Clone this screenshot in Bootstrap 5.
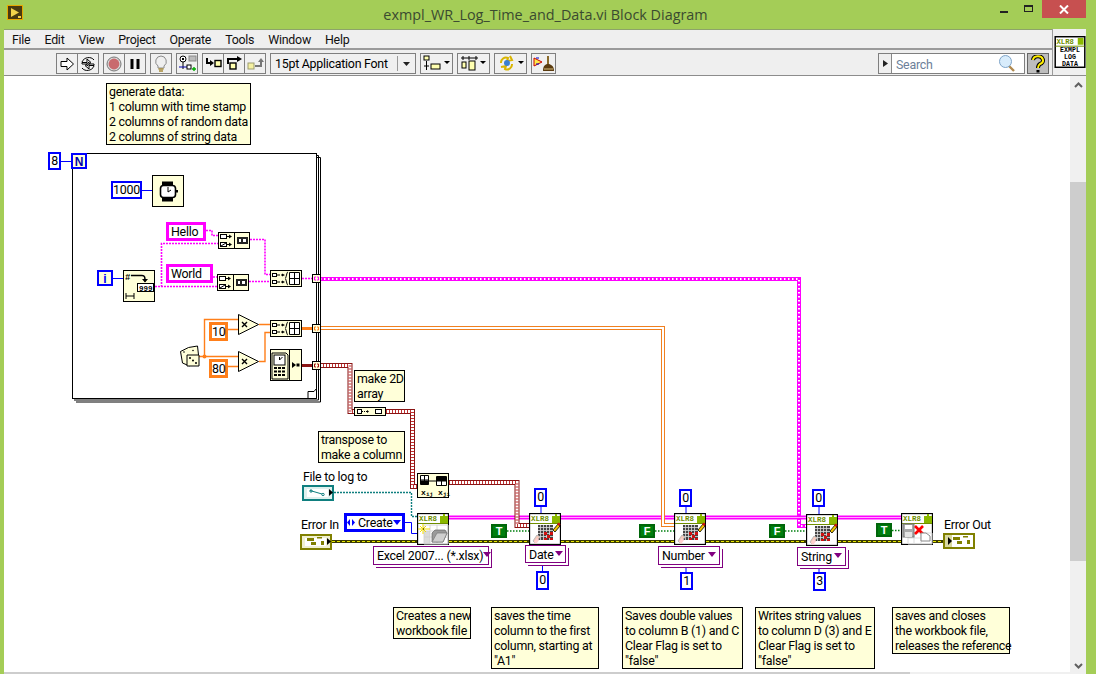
<!DOCTYPE html>
<html lang="en">
<head>
<meta charset="UTF-8">
<title>exmpl_WR_Log_Time_and_Data.vi Block Diagram</title>
<link href="https://cdn.jsdelivr.net/npm/bootstrap@5.3.0/dist/css/bootstrap.min.css" rel="stylesheet">
<style>
html, body { margin: 0; height: 100%; overflow: hidden; background: #a4cd57; }
.lv-win { width: 1096px; height: 674px; background: #a4cd57; font-family: "Open Sans", "Liberation Sans", sans-serif; color: #000; overflow: hidden; }
.lv-title { height: 29px; font-size: 14.4px; color: #3a4a30; line-height: 29px; padding-right: 5px; }
.lv-appicon { position: absolute; left: 7px; top: 5px; }
.lv-winbtns { position: absolute; right: 10px; top: 0; height: 18px; }
.lv-min { width: 8px; height: 2px; background: #222; margin: 11px 16px 0 0; }
.lv-max { width: 9px; height: 7px; border: 1px solid #222; border-top-width: 2px; margin: 5px 9px 0 0; }
.lv-close { width: 44px; height: 18px; background: #c75050; color: #fff; }
.lv-body { margin: 0 10px 0 4px; height: 645px; background: #fff; }
.lv-menu { height: 21px; padding: 0 0 0 8px; font-family: Roboto, sans-serif; font-size: 12.4px; letter-spacing: -.25px; gap: 14px; line-height: 20px; background: #efefef; border-top: 1px solid #8da36a; border-bottom: 2px solid #9a9a9a; color: #111; }
.lv-tools { height: 26px; padding: 3px 0 0 52px; gap: 4px; background: #efefef; border-bottom: 1px solid #8c8c8c; }
.tool-group { height: 21px; border: 1px solid #7f7f7f; background: #f0f0f0; flex-shrink: 0; }
.tool-cell { flex: 1; height: 19px; border-right: 1px solid #7f7f7f; }
.tool-cell:last-child { border-right: 0; }
.tw-43 { width: 43px; }
.tw-22 { width: 22px; }
.tw-64 { width: 64px; }
.tw-33 { width: 33px; }
.tw-25 { width: 25px; }
.tool-font { width: 146px; padding-left: 4px; line-height: 19px; color: #111; }
.tool-font-arrow { width: 18px; border-left: 1px solid #999; height: 15px; margin-left: auto; }
.lv-search { width: 147px; margin-left: auto; background: #fff; color: #6d7f99; }
.lv-search-text { color: #6d7f99; line-height: 21px; }
.lv-search-tab { width: 13px; background: #efefef; border-right: 1px solid #888; height: 19px; }
.lv-help { width: 22px; background: #bdbdbd; margin: 0 3px 0 -2px; border-color: #666; }
.lv-iconpanel { width: 34px; background: #efefef; border-left: 1px solid #9a9a9a; border-bottom: 1px solid #8c8c8c; padding: 7px 0 0 1px; }
.lv-canvas { position: relative; overflow: hidden; background: #fff; }
.lv-layer { position: absolute; left: -4px; top: -76px; width: 1096px; height: 674px; }
.lv-layer > svg { position: absolute; left: 0; top: 0; }
.lv-vscroll { width: 16px; background: #f0f0f0; }
.lv-vtop { height: 106px; padding-top: 6px; }
.lv-vthumb { height: 379px; background: #cdcdcd; }
.lv-vbottom { padding-top: 102px; }
.lv-hscroll { height: 2px; background: #f0f0f0; }
.lv-hthumb { width: 906px; background: #cdcdcd; }

.lv-text { font-family: Roboto, "Liberation Sans", sans-serif; font-size: 12.4px; line-height: 15px; letter-spacing: -.25px; color: #000; white-space: nowrap; }
.lv-note, .lv-const, .lv-ring, .lv-label, .lv-bool { position: absolute; box-sizing: border-box; }
.lv-note { background: #ffffd9; border: 1px solid #000; padding: 0 0 0 2px; }
.lv-const { text-align: center; line-height: 14px; background: #fff; border: 2px solid #00f; color: #000; }
.c-mag { border: 3px solid #f0f; text-align: left; padding-left: 2px; line-height: 13px; }
.c-org { border: 3px solid #ff7f1a; line-height: 13px; }
.lv-enum { display: flex; align-items: center; padding: 0 2px 0 0; border-width: 3px; }
.lv-enum-arrows { margin-right: 3px; flex-shrink: 0; }
.lv-ring { background: #fff; border: 1px solid #800080; box-shadow: 2px 2px 0 #fff, 3px 3px 0 #800080; padding: 1px 3px 0 3px; display: flex; justify-content: space-between; }
.lv-bool { background: #007f0e; border: 2px solid #00660a; color: #fff; font-weight: 700; font-family: "Liberation Sans", sans-serif; font-size: 11px; line-height: 10px; text-align: center; }
.caret-down { flex-shrink: 0; width: 0; height: 0; border: 4px solid transparent; border-top: 5px solid #800080; border-bottom: 0; margin-top: 4px; }
.caret-blue { border-top-color: #00f; margin: 0 0 0 auto; }

#n-gen { left: 106px; top: 83px; width: 145px; height: 62px; }
#n-2d { left: 354px; top: 370px; width: 51px; height: 32px; }
#n-tr { left: 318px; top: 431px; width: 87px; height: 32px; }
#n-a { left: 393px; top: 607px; width: 78px; height: 32px; }
#n-b { left: 491px; top: 607px; width: 108px; height: 62px; }
#n-c { left: 622px; top: 607px; width: 121px; height: 62px; }
#n-d { left: 755px; top: 607px; width: 120px; height: 62px; }
#n-e { left: 892px; top: 607px; width: 118px; height: 47px; }
#c-8 { left: 48px; top: 152px; width: 13px; height: 18px; }
#c-1000 { left: 111px; top: 181px; width: 31px; height: 18px; }
#c-hello { left: 166px; top: 222px; width: 40px; height: 19px; }
#c-world { left: 166px; top: 264px; width: 47px; height: 19px; }
#c-10 { left: 209px; top: 322px; width: 19px; height: 19px; }
#c-80 { left: 209px; top: 359px; width: 19px; height: 19px; }
#c-create { left: 344px; top: 513px; width: 61px; height: 19px; }
#c-d0 { left: 534px; top: 488px; width: 13px; height: 19px; }
#c-d1 { left: 536px; top: 571px; width: 13px; height: 19px; }
#c-n0 { left: 679px; top: 489px; width: 13px; height: 18px; }
#c-n1 { left: 680px; top: 572px; width: 13px; height: 18px; }
#c-s0 { left: 812px; top: 489px; width: 13px; height: 18px; }
#c-s1 { left: 813px; top: 572px; width: 13px; height: 19px; }
#r-xl { left: 373px; top: 546px; width: 116px; height: 19px; padding-right: 6px; }
#r-date { left: 525px; top: 545px; width: 41px; height: 18px; padding-right: 2px; }
#r-num { left: 658px; top: 546px; width: 62px; height: 19px; }
#r-str { left: 797px; top: 547px; width: 49px; height: 19px; }
#b-t1 { left: 491px; top: 524px; width: 16px; height: 14px; }
#b-f1 { left: 639px; top: 524px; width: 16px; height: 14px; }
#b-f2 { left: 769px; top: 524px; width: 16px; height: 14px; }
#b-t2 { left: 876px; top: 523px; width: 16px; height: 14px; }
#l-file { left: 303px; top: 469px; }
#l-ein { left: 301px; top: 517px; }
#l-eout { left: 944px; top: 517px; }

.lv-wire { fill: none; }
.w-blue { stroke: #00f; stroke-width: 1; }
.w-org { stroke: #ff7f1a; stroke-width: 1.4; }
.w-org3 { stroke: #ff7f1a; stroke-width: 3; }
.w-org2 { stroke: #f08020; stroke-width: 4; }
.w-white1 { stroke: #fff; stroke-width: 2; }
.w-str { stroke: #f0f; stroke-width: 1.6; stroke-dasharray: 2 1; }
.w-str2 { stroke: #f0f; stroke-width: 4; }
.w-str2b { stroke: #fff; stroke-width: 2; stroke-dasharray: 1.5 2.5; }
.w-ref { stroke: #f0f; stroke-width: 4; }
.w-refb { stroke: #ffa6ff; stroke-width: 1; }
.w-err { stroke: #3c3c00; stroke-width: 3; }
.w-errb { stroke: #e6e600; stroke-width: 1.2; stroke-dasharray: 3 2; }
.w-red { stroke: #8a1414; stroke-width: 5; }
.w-redb { stroke: #fff; stroke-width: 3; }
.w-redc { stroke: #c03030; stroke-width: 3; stroke-dasharray: 1 2; }
.w-path { stroke: #0f7f7f; stroke-width: 1.4; stroke-dasharray: 2 1; }
.w-bool { stroke: #007f0e; stroke-width: 1.4; stroke-dasharray: 1.5 1.5; }
.n-box { fill: #ffffd9; stroke: #000; stroke-width: 1; }
.n-txt { font-family: "Liberation Mono", monospace; font-weight: 700; fill: #000; }
.n-olive { font-family: "Liberation Mono", monospace; font-weight: 700; fill: #6f8f00; }
</style>
</head>
<body>
<div class="lv-win d-flex flex-column position-relative">
  <div class="lv-title text-center">exmpl_WR_Log_Time_and_Data.vi Block Diagram</div>
  <svg class="lv-appicon" width="16" height="15" viewBox="0 0 16 15"><rect x=".5" y=".5" width="15" height="14" fill="#4a3a10" stroke="#e8a800"/><path d="M4 3l8 4.500-8 4.500z" fill="#f3d24a"/><path d="M11 11h3v2h-3z" fill="#f3d24a"/></svg>
  <div class="lv-winbtns d-flex">
    <div class="lv-min"></div>
    <div class="lv-max"></div>
    <div class="lv-close d-flex align-items-center justify-content-center"><svg width="10" height="9" viewBox="0 0 10 9"><path d="M1 .5l8 8M9 .5l-8 8" stroke="#fff" stroke-width="2"/></svg></div>
  </div>
  <div class="lv-body d-flex flex-column">
    <div class="d-flex">
      <div class="flex-grow-1">
        <nav class="lv-menu d-flex">
          <span>File</span><span>Edit</span><span>View</span><span>Project</span><span>Operate</span><span>Tools</span><span>Window</span><span>Help</span>
        </nav>
        <div class="lv-tools d-flex">
          <div class="tool-group tw-43 d-flex">
            <div class="tool-cell d-flex align-items-center justify-content-center"><svg width="16" height="16" viewBox="0 0 16 16"><path d="M2 5.500h6V2l6.500 6L8 14v-3.500H2z" fill="#fff" stroke="#000"/></svg></div>
            <div class="tool-cell d-flex align-items-center justify-content-center"><svg width="18" height="16" viewBox="0 0 18 16"><path d="M3 6.500h5V3l4 3.500L8 10V8H3zM15 9.500h-5V13l-4-3.500L10 6v2h5z" fill="#fff" stroke="#000"/><path d="M3 6C5 1 12 0 15 4M15 10c-2 5-9 6-12 2" fill="none" stroke="#000"/></svg></div>
          </div>
          <div class="tool-group tw-43 d-flex">
            <div class="tool-cell d-flex align-items-center justify-content-center"><svg width="16" height="16" viewBox="0 0 16 16"><circle cx="8" cy="8" r="7" fill="#d8d8d8" stroke="#777"/><circle cx="8" cy="8" r="5.400" fill="#c96a6e"/></svg></div>
            <div class="tool-cell d-flex align-items-center justify-content-center"><svg width="12" height="12" viewBox="0 0 12 12"><path d="M1.500 1h3v10h-3zM7.500 1h3v10h-3z" fill="#000"/></svg></div>
          </div>
          <div class="tool-group tw-22 d-flex">
            <div class="tool-cell d-flex align-items-center justify-content-center"><svg width="14" height="18" viewBox="0 0 14 18"><path d="M7 1a5.500 5.500 0 0 0-3 10v2h6v-2A5.500 5.500 0 0 0 7 1z" fill="#efefef" stroke="#8a8a8a"/><path d="M4.500 14h5M5 16h4" stroke="#a58a3a" stroke-width="1.400"/></svg></div>
          </div>
          <div class="tool-group tw-22 d-flex">
            <div class="tool-cell d-flex align-items-center justify-content-center"><svg width="19" height="17" viewBox="0 0 19 17"><circle cx="5" cy="4" r="3" fill="#fff" stroke="#000"/><path d="M4 3h2v2H4z" fill="#000"/><rect x="11" y="1" width="7" height="5" fill="#bbb" stroke="#888"/><path d="M5 7v7" stroke="#000"/><path d="M1 12h11" stroke="#00a"/><rect x="9" y="10" width="4" height="4" fill="#fff" stroke="#000"/><path d="M14 14h4M16 12v4" stroke="#0a0" stroke-width="1.400"/></svg></div>
          </div>
          <div class="tool-group tw-64 d-flex">
            <div class="tool-cell d-flex align-items-center justify-content-center"><svg width="17" height="13" viewBox="0 0 17 13"><path d="M2 1v5h4" fill="none" stroke="#000" stroke-width="2"/><path d="M5 3l4 3-4 3z" fill="#000"/><rect x="10" y="3.500" width="6" height="6" fill="#ffffb0" stroke="#000" stroke-width="1.400"/></svg></div>
            <div class="tool-cell d-flex align-items-center justify-content-center"><svg width="17" height="15" viewBox="0 0 17 15"><rect x="4" y="7" width="6" height="6" fill="#ffffb0" stroke="#000" stroke-width="1.400"/><path d="M2 8V3h10" fill="none" stroke="#000" stroke-width="2"/><path d="M11 0l5 3-5 3z" fill="#000"/></svg></div>
            <div class="tool-cell d-flex align-items-center justify-content-center"><svg width="17" height="14" viewBox="0 0 17 14"><rect x="1" y="6" width="6" height="6" fill="#f4f0a0" stroke="#9c9c70"/><path d="M8 9h6V4" fill="none" stroke="#777" stroke-width="2"/><path d="M11 5l3-4 3 4z" fill="#777"/></svg></div>
          </div>
          <div class="tool-group tool-font lv-text d-flex align-items-center">15pt Application Font<div class="tool-font-arrow d-flex align-items-center justify-content-center"><svg width="7" height="4" viewBox="0 0 7 4"><path d="M0 0h7L3.500 4z" fill="#222"/></svg></div></div>
          <div class="tool-group tw-33 d-flex align-items-center justify-content-center"><svg width="28" height="17" viewBox="0 0 28 17"><rect x="1" y="1" width="5" height="4" fill="#ffffb0" stroke="#000"/><path d="M3.500 6v9M1 11h5" stroke="#000"/><rect x="8" y="9" width="9" height="5" fill="#ffffb0" stroke="#000"/><path d="M21 6h6l-3 3z" fill="#000"/></svg></div>
          <div class="tool-group tw-33 d-flex align-items-center justify-content-center"><svg width="28" height="17" viewBox="0 0 28 17"><path d="M1 3h17" stroke="#000"/><path d="M3 1v4M16 1v4M9 1v4" stroke="#000"/><rect x="2" y="7" width="4" height="6" fill="#ffffb0" stroke="#000"/><rect x="9" y="6" width="6" height="9" fill="#ffffb0" stroke="#000"/><path d="M20 6h6l-3 3z" fill="#000"/></svg></div>
          <div class="tool-group tw-33 d-flex align-items-center justify-content-center"><svg width="28" height="17" viewBox="0 0 28 17"><path d="M4 8a5 5 0 0 1 7-5l-1 3 5-1-2-4M15 9a5 5 0 0 1-7 5l1-3-5 1" fill="none" stroke="#d8b400" stroke-width="2"/><circle cx="10" cy="8" r="3" fill="#3a7fd0"/><path d="M21 6h6l-3 3z" fill="#000"/></svg></div>
          <div class="tool-group tw-25 d-flex align-items-center justify-content-center"><svg width="22" height="18" viewBox="0 0 22 18"><path d="M1 3l8 4-8 4z" fill="#ffe94a" stroke="#c00"/><path d="M3 3h3M3 9h3" stroke="#00c"/><path d="M15 1v9" stroke="#8a6a2a" stroke-width="2"/><path d="M10 16c0-5 2-7 5-7s6 2 6 7z" fill="#5b3c10"/><path d="M11 14h9" stroke="#d8c080"/></svg></div>
          <div class="tool-group lv-search lv-text d-flex"><div class="lv-search-tab d-flex align-items-center justify-content-center"><svg width="5" height="7" viewBox="0 0 5 7"><path d="M0 0l5 3.500L0 7z" fill="#222"/></svg></div><span class="flex-grow-1 ps-1 lv-search-text">Search</span><svg class="me-2" width="18" height="18" viewBox="0 0 18 18"><path d="M10 11l6 6" stroke="#b08a50" stroke-width="2.400"/><circle cx="7.500" cy="7.500" r="6" fill="#d8ecfb" stroke="#7ea4c8"/></svg></div>
          <div class="tool-group lv-help d-flex align-items-center justify-content-center"><svg width="14" height="18" viewBox="0 0 14 18"><path d="M2 5a5 4 0 1 1 7 4c-1.500 1-2 2-2 4" fill="none" stroke="#000" stroke-width="4"/><path d="M5.500 15h3v2.500h-3z" fill="#000"/><path d="M2 5a5 4 0 1 1 7 4c-1.500 1-2 2-2 4" fill="none" stroke="#ffef00" stroke-width="2"/></svg></div>
        </div>
      </div>
      <div class="lv-iconpanel">
        <svg class="d-block" width="32" height="32" viewBox="0 0 32 33"><rect x=".75" y=".75" width="30.500" height="31.500" fill="#fff" stroke="#000" stroke-width="1.500"/><rect x="24" y="2" width="6" height="7" fill="#8ab800"/><text x="2" y="8" font-size="7.500" class="n-olive">XLR8</text><path d="M1 10.500h30" stroke="#6f8f00"/><text x="16" y="17" font-size="6.800" text-anchor="middle" class="n-txt">EXMPL</text><text x="16" y="24" font-size="6.800" text-anchor="middle" class="n-txt">LOG</text><text x="16" y="31" font-size="6.800" text-anchor="middle" class="n-txt">DATA</text></svg>
      </div>
    </div>
    <div class="d-flex flex-grow-1">
      <div class="lv-canvas flex-grow-1">
        <div class="lv-layer">
          <svg width="1096" height="674" viewBox="0 0 1096 674">
            <defs>
              <symbol id="xl-head" viewBox="0 0 32 32">
                <rect x=".5" y=".5" width="31" height="31" fill="#fff" stroke="#000" stroke-width="1.300"/>
                <path d="M23 3h3V1h2v2h3v7h-8z" fill="#8ab800"/>
                <text x="2" y="8" font-size="7.500" class="n-olive">XLR8</text>
                <path d="M1 10.500h30" stroke="#6f8f00"/>
              </symbol>
              <symbol id="xl-write" viewBox="0 0 32 32">
                <use href="#xl-head" width="32" height="32"/>
                <rect x="9" y="12" width="15" height="15" fill="#444"/>
                <path d="M11.500 12v15M14.500 12v15M17.500 12v15M20.500 12v15M9 14.500h15M9 17.500h15M9 20.500h15M9 23.500h15" stroke="#ddd" stroke-width=".8"/>
                <path d="M15 19h3v3h-3zM18 22h3v3h-3zM15 25h3v2h-3zM21 25h3v2h-3zM21 19h3v3h-3z" fill="#d01010"/>
                <path d="M4 28l4-6 3 2-5 6z" fill="#f7c8b8" stroke="#bbb"/>
                <path d="M6 30l3-4" stroke="#ffd0d0" stroke-width="3"/>
                <path d="M24 17l5-6 2 2-5 6z" fill="#f2c400" stroke="#000" stroke-width=".8"/>
                <path d="M28 11l2-1.500 1.500 2-1.500 1.500z" fill="#d01010"/>
              </symbol>
              <symbol id="xl-create" viewBox="0 0 32 32">
                <use href="#xl-head" width="32" height="32"/>
                <path d="M7 12h24v19H7zM7 18h24M7 24h24M13 12v19M20 12v19" fill="none" stroke="#d6d6d6" stroke-width="1"/>
                <rect x="7" y="18" width="6" height="13" fill="#ccc" opacity=".7"/>
                <path d="M1 16h12M6 11v10M3 13l6 6M9 13l-6 6" stroke="#f2dc00" stroke-width="1"/>
                <path d="M6 16h1" stroke="#000"/>
                <path d="M15 29v-9l3-3h10l2 3-4 9z" fill="#9a9a9a" stroke="#666" stroke-width=".7"/>
                <path d="M15 29l5-9h10l-4 9z" fill="#cfcfcf" stroke="#777" stroke-width=".7"/>
              </symbol>
              <symbol id="xl-close" viewBox="0 0 32 32">
                <use href="#xl-head" width="32" height="32"/>
                <path d="M7 20h24v11H7zM7 25h24M13 20v11M20 20v11" fill="none" stroke="#ddd"/>
                <rect x="2" y="11" width="11" height="13" fill="#aaa" stroke="#777"/>
                <rect x="4" y="12" width="7" height="4" fill="#fff"/>
                <path d="M4 19h7v5H4z" fill="#e4e4e4"/>
                <path d="M14 13l8 8M22 13l-8 8" stroke="#f00" stroke-width="2.600"/>
                <path d="M20 26v-6h5l4 3v5h-9z" fill="#fff" stroke="#888"/>
              </symbol>
              <symbol id="n-concat" viewBox="0 0 32 17">
                <rect x=".5" y=".5" width="31" height="16" class="n-box"/>
                <path d="M16.500 1v15" stroke="#000"/>
                <rect x="2.500" y="2.500" width="6" height="4" fill="#fff" stroke="#000"/>
                <rect x="2.500" y="10.500" width="6" height="4" fill="#fff" stroke="#000"/>
                <path d="M3 14l5-3" stroke="#000"/>
                <path d="M9 4.500h3M9 12.500h3" stroke="#000"/>
                <path d="M11 2.500l3 2-3 2zM11 10.500l3 2-3 2z" fill="#000"/>
                <rect x="19" y="5" width="11" height="7" fill="#222"/>
                <path d="M21 7h2v3h-2zM25 7h3v3h-3z" fill="#fff"/>
              </symbol>
              <symbol id="n-build" viewBox="0 0 32 17">
                <rect x=".5" y=".5" width="31" height="16" class="n-box"/>
                <rect x="2.500" y="3.500" width="4" height="3" fill="#fff" stroke="#000"/>
                <rect x="2.500" y="10.500" width="4" height="3" fill="#fff" stroke="#000"/>
                <path d="M7 5h3M7 12h3M11 5h1M11 12h1" stroke="#000"/>
                <path d="M12 3.500l3 1.500-3 1.500zM12 10.500l3 1.500-3 1.500z" fill="#000"/>
                <path d="M18 2c-1.500 0-1.500 6-3 6.500 1.500 .5 1.500 6.500 3 6.500" fill="none" stroke="#000"/>
                <path d="M19.500 2.500h10v12h-10zM24.500 2.500v12M19.500 8.500h10" fill="#fff" stroke="#000" stroke-width="1"/>
              </symbol>
              <symbol id="n-time" viewBox="0 0 32 32">
                <rect x=".5" y=".5" width="31" height="31" class="n-box"/>
                <path d="M19.500 1v30" stroke="#000"/>
                <path d="M2 4h14l2 2v24H2z" fill="#ffffd9" stroke="#000"/>
                <rect x="4" y="6" width="11" height="10" fill="#fff" stroke="#000"/>
                <path d="M9.500 11V8M9.500 11l3-3" stroke="#000"/>
                <rect x="4" y="18" width="3" height="2" fill="#000"/><rect x="8" y="18" width="3" height="2" fill="#000"/><rect x="12" y="18" width="3" height="2" fill="#000"/>
                <rect x="4" y="21.500" width="3" height="2" fill="#000"/><rect x="8" y="21.500" width="3" height="2" fill="#000"/><rect x="12" y="21.500" width="3" height="2" fill="#000"/>
                <rect x="4" y="25" width="3" height="2" fill="#000"/><rect x="8" y="25" width="3" height="2" fill="#000"/><rect x="12" y="25" width="3" height="2" fill="#000"/>
                <path d="M22 13l4 3-4 3z" fill="#000"/>
                <path d="M26.500 14.500h3v3h-3z" fill="#000"/>
              </symbol>
            </defs>

            <path d="M76 157.500h244.500v244.500H76" class="lv-wire" stroke="#000"/>
            <path d="M74 155.500h244.500v244.500H74" class="lv-wire" stroke="#000"/>
            <rect x="72.500" y="153.500" width="244" height="245" fill="#fff" stroke="#000"/>
            <path d="M308 398.500v-7h6l2.500-3v10z" fill="#fff" stroke="#000"/>

            <!-- wires -->
            <path d="M61 161.500h11M142 190.500h10M113 278.500h10M405 522.500h6.500v11h6M541 507v7M542.500 563v9M686 507v7M686 565v8M819 507v8M819 566v7" class="lv-wire w-blue"/>
            <path d="M206 230.500h6v5h7M155 286.500h6.500v-43h57M155 286.500h62M213 277h5M250 239.500h15v35h6M249 281.500h22M302 278.500h11" class="lv-wire w-str"/>
            <path d="M320 279h479v247h7" class="lv-wire w-str2"/>
            <path d="M320 279h479v247h7" class="lv-wire w-str2b"/>
            <path d="M449 517.500h453" class="lv-wire w-ref"/>
            <path d="M449 517.500h453" class="lv-wire w-refb"/>
            <path d="M332 541.500h85M449 541.500h80M561 541.500h113M706 541.500h100M838 541.500h63M933 541.500h11" class="lv-wire w-err"/>
            <path d="M332 541.500h85M449 541.500h80M561 541.500h113M706 541.500h100M838 541.500h63M933 541.500h11" class="lv-wire w-errb"/>
            <path d="M199 356.500h39M204.500 356.500v-37h34M228 329.500h10M228 366.500h10M259 324.500h12M259 361.500h6v-29h6" class="lv-wire w-org"/>
            <circle cx="204.500" cy="356.500" r="2" fill="#ff7f1a"/>
            <path d="M302 328.500h11" class="lv-wire w-org3"/>
            <path d="M320 328h343v197h11" class="lv-wire w-org2"/>
            <path d="M320 328h343v197h11" class="lv-wire w-white1"/>
            <path d="M302 365.500h11" class="lv-wire" stroke="#8a1414" stroke-width="3"/>
            <path d="M320 365.500h30v46h4M386 411.500h26.500v75h5M449 482.500h68v43h12.500" class="lv-wire w-red"/>
            <path d="M320 365.500h30v46h4M386 411.500h26.500v75h5M449 482.500h68v43h12.500" class="lv-wire w-redb"/>
            <path d="M320 365.500h30v46h4M386 411.500h26.500v75h5M449 482.500h68v43h12.500" class="lv-wire w-redc"/>
            <path d="M334 492.500h77.500v24h6" class="lv-wire w-path"/>
            <path d="M507 531h22M655 531h19M785 531h21M892 530.500h9" class="lv-wire w-bool"/>

            <!-- for loop terminals -->
            <rect x="72" y="154" width="14" height="14" fill="#ffffd9" stroke="#00f" stroke-width="2"/>
            <text x="79" y="165.500" text-anchor="middle" font-size="12" font-weight="700" font-family="Liberation Sans" fill="#00a">N</text>
            <rect x="98" y="271" width="14" height="14" fill="#ffffd9" stroke="#00f" stroke-width="2"/>
            <text x="105" y="282.500" text-anchor="middle" font-size="12" font-weight="700" font-family="Liberation Sans" fill="#00f">i</text>

            <!-- wait -->
            <rect x="152.500" y="175.500" width="31" height="31" class="n-box"/>
            <path d="M162 181.500h11v4h-11zM162 197h11v4.500h-11z" fill="#000"/>
            <rect x="160.500" y="185.500" width="15" height="12" rx="3" fill="#fff" stroke="#000" stroke-width="1.600"/>
            <path d="M168 192v-5M168 192l3 -2" stroke="#000"/><path d="M176 190h2v2.500h-2z" fill="#000"/>

            <!-- number to string -->
            <rect x="123.500" y="270.500" width="31" height="31" class="n-box"/>
            <text x="125" y="280" font-size="9" class="n-txt">#</text>
            <path d="M131 275.500h11c3 0 3 2 3 6" fill="none" stroke="#000" stroke-width="1.500"/><path d="M142 279h6l-3 3.500z" fill="#000"/>
            <rect x="137.500" y="283.500" width="16" height="8" fill="#fff" stroke="#000"/>
            <text x="139" y="290.500" font-size="7.500" class="n-txt">999</text>
            <path d="M126 293v6M134 293v6M126 296h8" stroke="#000"/>

            <use href="#n-concat" x="218" y="232" width="32" height="17"/>
            <use href="#n-concat" x="217" y="274" width="32" height="17"/>
            <use href="#n-build" x="270" y="270" width="32" height="17"/>
            <use href="#n-build" x="270" y="320" width="32" height="17"/>
            <use href="#n-time" x="270" y="349" width="32" height="32"/>

            <!-- multiply -->
            <path d="M238.500 314.500v20l20-10z" fill="#ffffd9" stroke="#000"/>
            <path d="M238.500 351.500v20l20-10z" fill="#ffffd9" stroke="#000"/>
            <path d="M242 322l5 5M247 322l-5 5M242 359l5 5M247 359l-5 5" stroke="#000" stroke-width="1.400"/>

            <!-- dice -->
            <path d="M180.500 351.500l8-4 9 -1.500 1 9-9 11-7-3z" fill="#ffffd9" stroke="#000"/>
            <path d="M187 355h12v11h-12z" fill="#ffffd9" stroke="#000"/>
            <circle cx="190" cy="358" r="1" fill="#000"/><circle cx="193" cy="360.500" r="1" fill="#000"/><circle cx="196" cy="363" r="1" fill="#000"/><circle cx="184" cy="352" r=".8" fill="#000"/><circle cx="193" cy="350.500" r=".8" fill="#000"/>

            <!-- tunnels -->
            <rect x="312.500" y="274.500" width="8" height="8" fill="#ffffd9" stroke="#000"/><path d="M316 277h-1.500v3h1.500M317 277h1.500v3H317" fill="none" stroke="#f0f"/>
            <rect x="312.500" y="324.500" width="8" height="8" fill="#ffffd9" stroke="#000"/><path d="M316 327h-1.500v3h1.500M317 327h1.500v3H317" fill="none" stroke="#ff7f1a"/>
            <rect x="312.500" y="361.500" width="8" height="8" fill="#ffffd9" stroke="#000"/><path d="M316 364h-1.500v3h1.500M317 364h1.500v3H317" fill="none" stroke="#a01010"/>

            <!-- reshape -->
            <rect x="354.500" y="407.500" width="31" height="8" class="n-box"/>
            <rect x="357.500" y="409.500" width="4" height="4" fill="#fff" stroke="#000"/><path d="M362 411.500h6" stroke="#000" stroke-dasharray="1 1"/><path d="M367 410l2 1.500-2 1.500z" fill="#000"/><rect x="375.500" y="409.500" width="6" height="4" fill="#fff" stroke="#000"/>

            <!-- transpose -->
            <rect x="417.500" y="473.500" width="31" height="24" class="n-box"/>
            <path d="M420.500 475.500h8v9h-8zM436.500 476.500h10v9h-10zM424.500 475.500v9M420.500 480h8M441.500 476.500v9M436.500 481h10" fill="#fff" stroke="#000"/>
            <rect x="421" y="480.500" width="3.500" height="4" fill="#000"/><rect x="425" y="480.500" width="3.500" height="4" fill="#000"/><rect x="437" y="477" width="4" height="4" fill="#000"/><rect x="442" y="477" width="4" height="4" fill="#000"/>
            <path d="M429 481h7" stroke="#000"/>
            <text x="421" y="494.500" font-size="8" class="n-txt">x</text><text x="426" y="496" font-size="6" class="n-txt">ij</text>
            <text x="438" y="494.500" font-size="8" class="n-txt">x</text><text x="443" y="496" font-size="6" class="n-txt">ji</text>

            <!-- xlr8 nodes -->
            <use href="#xl-create" x="417" y="513" width="32" height="32"/>
            <use href="#xl-write" x="529" y="513" width="32" height="32"/>
            <use href="#xl-write" x="674" y="513" width="32" height="32"/>
            <use href="#xl-write" x="806" y="514" width="32" height="32"/>
            <use href="#xl-close" x="901" y="513" width="32" height="32"/>

            <!-- path and error terminals -->
            <rect x="303" y="486" width="30" height="14" fill="#dff0ee" stroke="#0f7f7f" stroke-width="2"/>
            <rect x="307" y="489" width="21" height="8" fill="#fff"/>
            <path d="M310 490.500l12 3.500" stroke="#0f7f7f"/><circle cx="311" cy="491" r="1.200" fill="none" stroke="#0f7f7f"/><circle cx="323" cy="494.500" r="1.200" fill="none" stroke="#0f7f7f"/>
            <path d="M329 489l4 3.500-4 3.500z" fill="#000"/>
            <rect x="301" y="535" width="30" height="14" fill="#f0f0d0" stroke="#808000" stroke-width="2"/>
            <rect x="305" y="538" width="21" height="8" fill="#fff"/>
            <path d="M307 538h7v3h-7zM317 537h5v1.500h-5zM311 542h5v3h-5zM321 541h3v4h-3z" fill="#808000"/>
            <path d="M327 538l4 3.500-4 3.500z" fill="#000"/>
            <rect x="944" y="534" width="30" height="14" fill="#fff" stroke="#808000" stroke-width="2"/>
            <rect x="945" y="535" width="7" height="12" fill="#d8d8a0"/>
            <path d="M948 537l4 4-4 4z" fill="#000"/>
            <path d="M953 537h7v3h-7zM963 536h5v1.500h-5zM957 541h5v3h-5zM967 540h3v4h-3z" fill="#808000"/>
          </svg>

          <div id="n-gen" class="lv-note lv-text">generate data:<br>1 column with time stamp<br>2 columns of random data<br>2 columns of string data</div>
          <div id="c-8" class="lv-const lv-text">8</div>
          <div id="c-1000" class="lv-const lv-text">1000</div>
          <div id="c-hello" class="lv-const c-mag lv-text">Hello</div>
          <div id="c-world" class="lv-const c-mag lv-text">World</div>
          <div id="c-10" class="lv-const c-org lv-text">10</div>
          <div id="c-80" class="lv-const c-org lv-text">80</div>
          <div id="n-2d" class="lv-note lv-text">make 2D<br>array</div>
          <div id="n-tr" class="lv-note lv-text">transpose to<br>make a column</div>
          <div id="l-file" class="lv-label lv-text">File to log to</div>
          <div id="l-ein" class="lv-label lv-text">Error In</div>
          <div id="l-eout" class="lv-label lv-text">Error Out</div>
          <div id="c-create" class="lv-const lv-enum lv-text"><svg width="8" height="7" viewBox="0 0 8 7" class="lv-enum-arrows"><path d="M3 0v7L0 3.500zM5 0v7l3-3.500z" fill="#00f"/></svg>Create<span class="caret-down caret-blue"></span></div>
          <div id="r-xl" class="lv-ring lv-text">Excel 2007... (*.xlsx)<span class="caret-down"></span></div>
          <div id="r-date" class="lv-ring lv-text">Date<span class="caret-down"></span></div>
          <div id="r-num" class="lv-ring lv-text">Number<span class="caret-down"></span></div>
          <div id="r-str" class="lv-ring lv-text">String<span class="caret-down"></span></div>
          <div id="c-d0" class="lv-const lv-text">0</div>
          <div id="c-d1" class="lv-const lv-text">0</div>
          <div id="c-n0" class="lv-const lv-text">0</div>
          <div id="c-n1" class="lv-const lv-text">1</div>
          <div id="c-s0" class="lv-const lv-text">0</div>
          <div id="c-s1" class="lv-const lv-text">3</div>
          <div id="b-t1" class="lv-bool">T</div>
          <div id="b-f1" class="lv-bool">F</div>
          <div id="b-f2" class="lv-bool">F</div>
          <div id="b-t2" class="lv-bool">T</div>
          <div id="n-a" class="lv-note lv-text">Creates a new<br>workbook file</div>
          <div id="n-b" class="lv-note lv-text">saves the time<br>column to the first<br>column, starting at<br>"A1"</div>
          <div id="n-c" class="lv-note lv-text">Saves double values<br>to column B (1) and C<br>Clear Flag is set to<br>"false"</div>
          <div id="n-d" class="lv-note lv-text">Writes string values<br>to column D (3) and E<br>Clear Flag is set to<br>"false"</div>
          <div id="n-e" class="lv-note lv-text">saves and closes<br>the workbook file,<br>releases the reference</div>
        </div>
      </div>
      <div class="lv-vscroll d-flex flex-column">
        <div class="lv-vtop d-flex justify-content-center align-items-start"><svg width="9" height="6" viewBox="0 0 9 6"><path d="M1 5l3.500-3.500L8 5" fill="none" stroke="#606060" stroke-width="2"/></svg></div>
        <div class="lv-vthumb"></div>
        <div class="lv-vbottom d-flex justify-content-center align-items-start"><svg width="9" height="6" viewBox="0 0 9 6"><path d="M1 1l3.500 3.500L8 1" fill="none" stroke="#606060" stroke-width="2"/></svg></div>
      </div>
    </div>
    <div class="lv-hscroll d-flex"><div class="lv-hthumb"></div></div>
  </div>
</div>
<script src="https://cdn.jsdelivr.net/npm/bootstrap@5.3.0/dist/js/bootstrap.bundle.min.js"></script>
</body>
</html>
